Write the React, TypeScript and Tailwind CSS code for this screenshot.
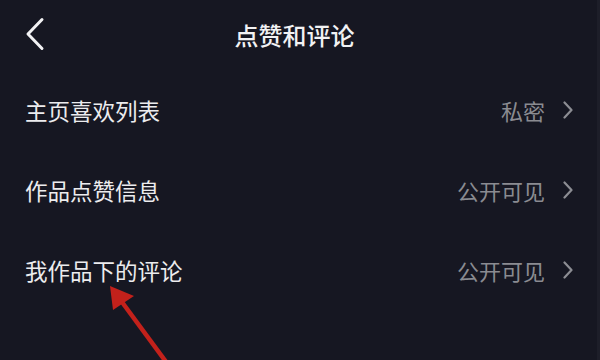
import React from "react";

const Chevron = () => (
  <svg width="10" height="18" viewBox="0 0 10 18" className="shrink-0">
    <path d="M1.5 1.5 L8.5 9 L1.5 16.5" fill="none" stroke="#8c8d93" strokeWidth="2.2" strokeLinecap="round" strokeLinejoin="round" />
  </svg>
);

const Row = ({ label, value }: { label: string; value: string }) => (
  <div className="flex h-[80px] items-center justify-between pl-[25px] pr-[24px]">
    <span className="text-[22.5px] leading-none text-[#ececee]">{label}</span>
    <div className="flex items-center gap-[18px]">
      <span className="text-[22px] leading-none text-[#8a8b91]">{value}</span>
      <Chevron />
    </div>
  </div>
);

export default function App() {
  return (
    <div
      className="relative h-[360px] w-[600px] overflow-hidden bg-[#161722] border-r-[3px] border-[#1d1e29]"
      style={{ fontFamily: '"Noto Sans CJK SC", "Noto Sans", sans-serif' }}
    >
      <div className="relative flex h-[70px] items-center justify-center">
        <svg width="20" height="34" viewBox="0 0 20 34" className="absolute left-[25px] top-[17px]">
          <path d="M17 2.5 L3 17 L17 31.5" fill="none" stroke="#f2f2f4" strokeWidth="3" strokeLinecap="round" strokeLinejoin="round" />
        </svg>
        <span className="ml-[-8px] text-[24px] font-medium leading-none text-[#f2f2f4]">点赞和评论</span>
      </div>
      <Row label="主页喜欢列表" value="私密" />
      <Row label="作品点赞信息" value="公开可见" />
      <Row label="我作品下的评论" value="公开可见" />
      <svg
        className="pointer-events-none absolute left-0 top-0"
        width="600"
        height="360"
        viewBox="0 0 600 360"
      >
        <line x1="119" y1="298" x2="172" y2="370" stroke="#c3211b" strokeWidth="4.5" />
        <polygon points="110,286 134,296 113,310" fill="#c3211b" />
      </svg>
    </div>
  );
}
